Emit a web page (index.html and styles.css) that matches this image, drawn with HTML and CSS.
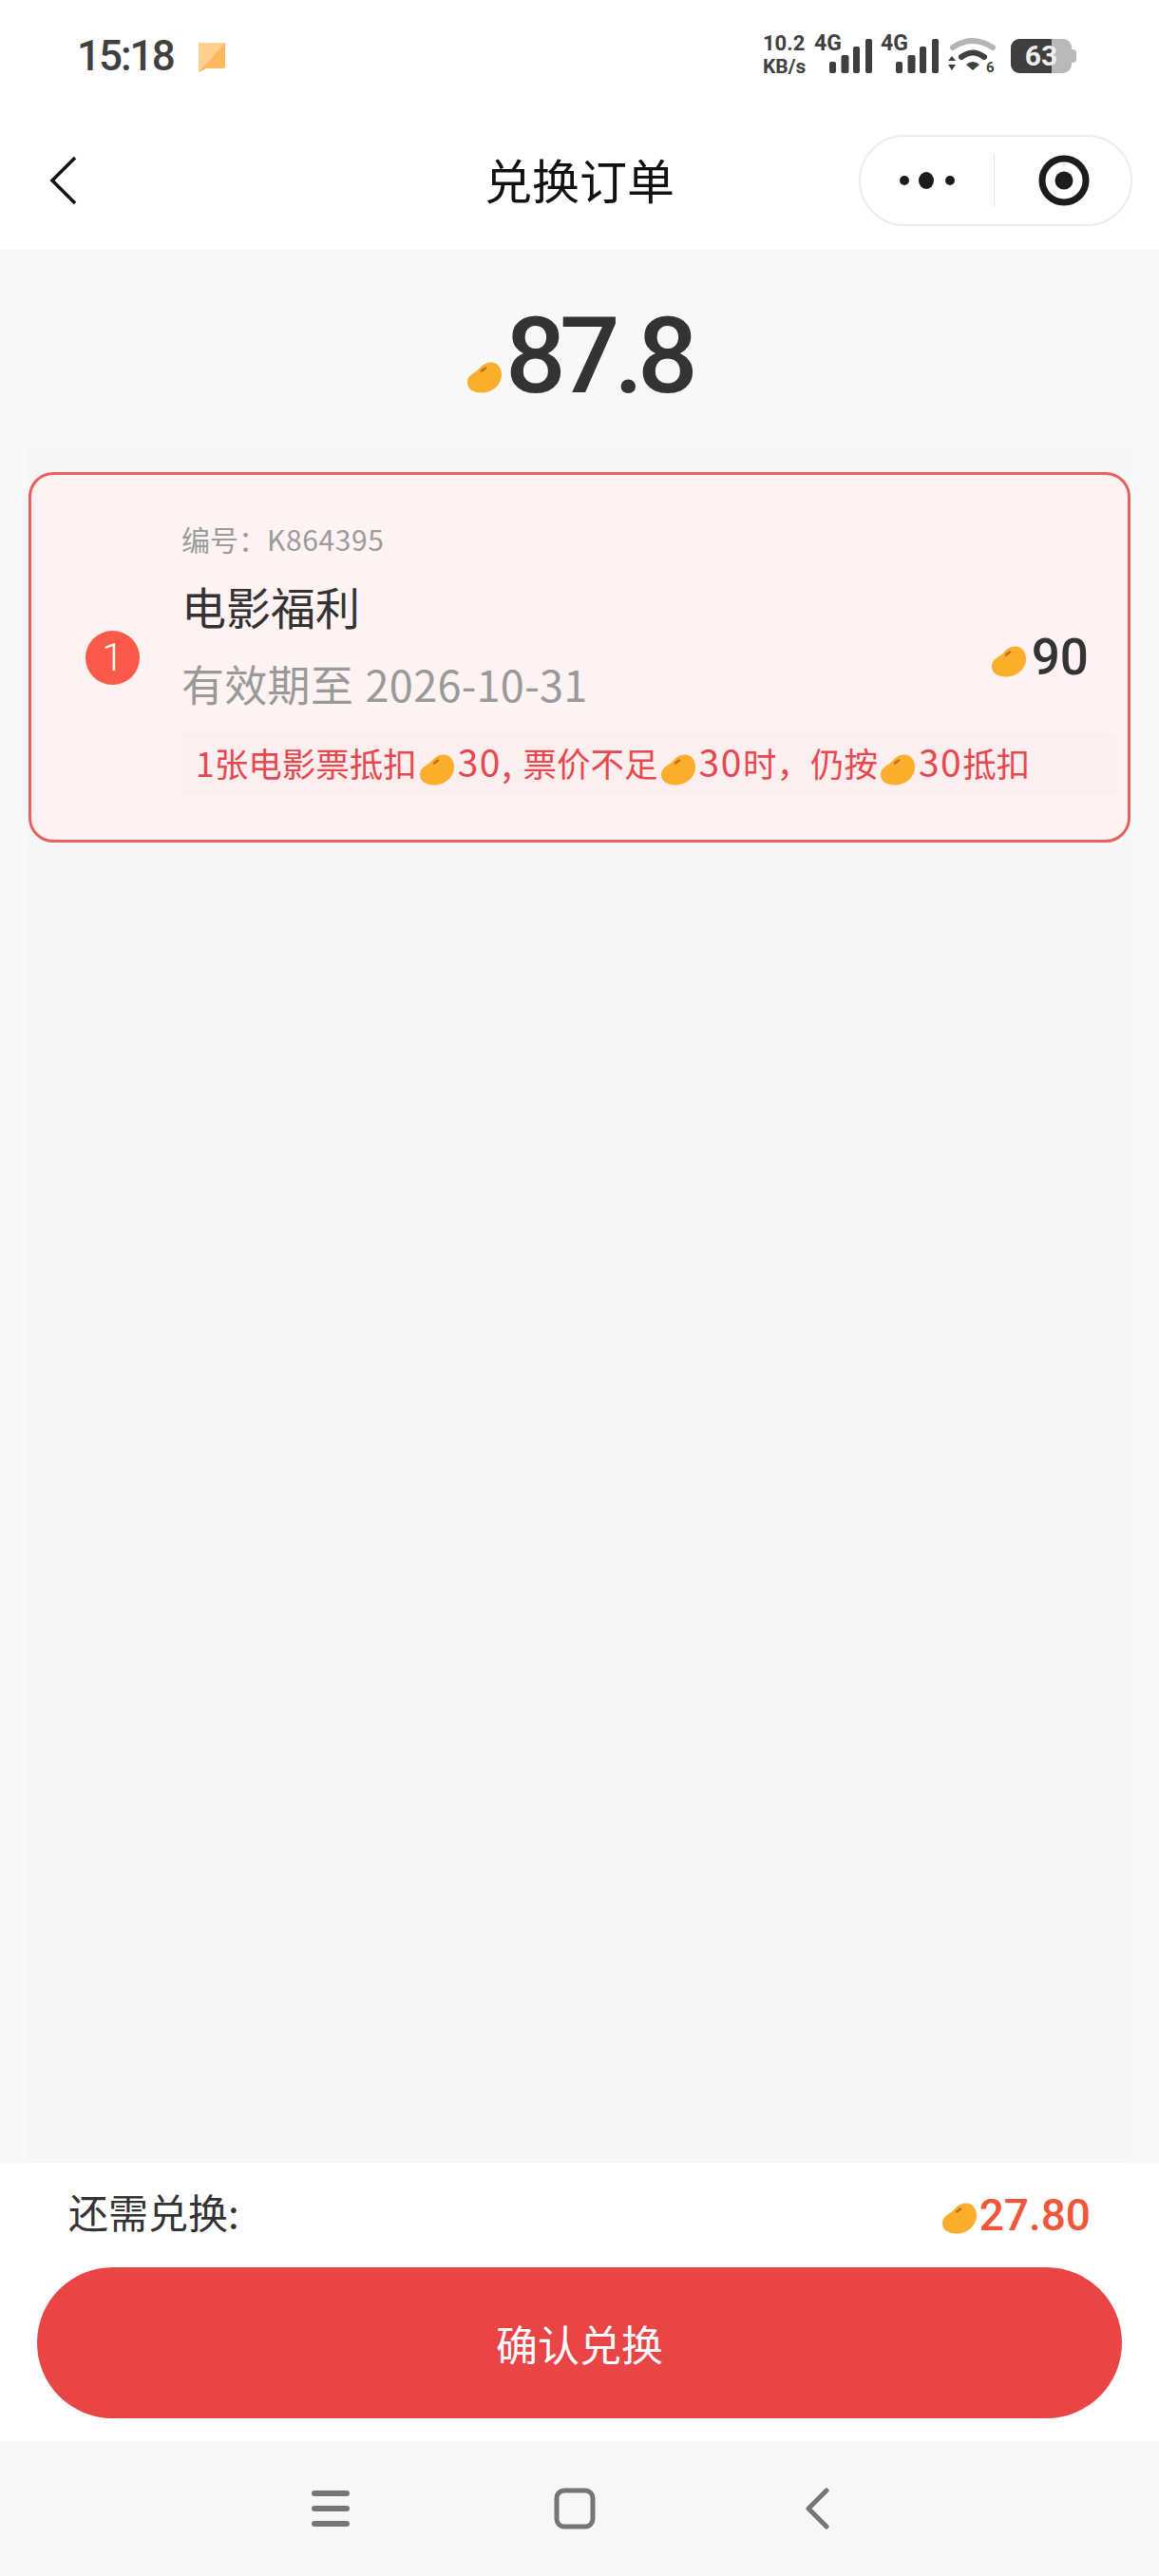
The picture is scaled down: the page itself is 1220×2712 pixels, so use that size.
FILE: index.html
```html
<!DOCTYPE html>
<html lang="zh-CN">
  <head>
    <meta charset="UTF-8" />
    <meta name="viewport" content="width=device-width, initial-scale=1.0" />
    <title>兑换订单</title>
    <link rel="stylesheet" href="styles.css">
  </head>
  <body>
    <svg class="defs" width="0" height="0">
      <symbol id="bean" viewBox="0 0 36 32">
        <path d="M0 21C0 14 6 12 11 8C15 4 18 0 25 0C32 0 36 6 36 13C36 23 27 32 15 32C6 32 0 28 0 21Z" fill="#fbad2c" />
        <path d="M15 9L19 6" stroke="#b9701c" stroke-width="2.500" stroke-linecap="round" />
      </symbol>
    </svg>

    <div class="status-bar">
      <div class="status-left">
        <span class="clock">15:18</span>
        <svg class="msg-icon" width="28" height="31" viewBox="0 0 28 31">
          <path d="M0 0H28V25Q28 27 26 27H8L0 31Z" fill="#ffd08c" />
          <path d="M28 0V25Q28 27 26 27H8L0 31Z" fill="#ffb95c" />
        </svg>
      </div>
      <div class="status-right">
        <div class="speed"><span>10.2</span><span class="speed-unit">KB/s</span></div>
        <div class="signal">
          <span class="net">4G</span>
          <svg width="46" height="36" viewBox="0 0 46 36">
            <rect x="0" y="24" width="7" height="12" rx="2" />
            <rect x="12.500" y="17" width="8" height="19" rx="2" />
            <rect x="25" y="8" width="7" height="28" rx="2" />
            <rect x="38" y="0" width="7" height="36" rx="2" />
          </svg>
        </div>
        <div class="signal">
          <span class="net">4G</span>
          <svg width="46" height="36" viewBox="0 0 46 36">
            <rect x="0" y="24" width="7" height="12" rx="2" />
            <rect x="12.500" y="17" width="8" height="19" rx="2" />
            <rect x="25" y="8" width="7" height="28" rx="2" />
            <rect x="38" y="0" width="7" height="36" rx="2" />
          </svg>
        </div>
        <svg class="wifi" width="52" height="44" viewBox="0 0 52 44">
          <path d="M6 10Q26 -4 48 10" fill="none" stroke="#b5b5b5" stroke-width="6" stroke-linecap="round" />
          <path d="M15 20Q27 11 39 20" fill="none" stroke="#3f3f3f" stroke-width="6" stroke-linecap="round" />
          <path d="M20 28Q27 22 34 28L27 34Z" fill="#3f3f3f" />
          <path d="M1 24L5 19L9 24ZM1 28L5 34L9 28Z" fill="#3f3f3f" />
          <text class="wifi-num" x="41" y="36">6</text>
        </svg>
        <div class="battery">
          <span class="battery-num">63</span>
          <span class="battery-nub"></span>
        </div>
      </div>
    </div>

    <div class="nav-bar">
      <svg class="back" width="30" height="52" viewBox="0 0 30 52">
        <path d="M27 2L3 26L27 50" fill="none" stroke="#111" stroke-width="3.500" />
      </svg>
      <h1 class="nav-title">兑换订单</h1>
      <div class="capsule">
        <div class="capsule-part">
          <svg width="58" height="18" viewBox="0 0 58 18">
            <circle cx="5" cy="9" r="5" fill="#1c1c1c" />
            <ellipse cx="28" cy="9" rx="8" ry="9" fill="#1c1c1c" />
            <circle cx="53" cy="9" r="5" fill="#1c1c1c" />
          </svg>
        </div>
        <div class="capsule-line"></div>
        <div class="capsule-part">
          <svg width="54" height="54" viewBox="0 0 54 54">
            <circle cx="27" cy="27" r="23" fill="none" stroke="#1c1c1c" stroke-width="7" />
            <circle cx="27" cy="27" r="9.500" fill="#1c1c1c" />
          </svg>
        </div>
      </div>
    </div>

    <div class="main">
      <div class="total">
        <svg class="bean bean-total"><use href="#bean" /></svg>
        <span class="total-num">87.8</span>
      </div>

      <div class="list">
        <div class="card">
          <div class="card-index">1</div>
          <div class="card-info">
            <div class="card-no">编号：<span class="card-code">K864395</span></div>
            <div class="card-name">电影福利</div>
            <div class="card-date">有效期至 2026-10-31</div>
          </div>
          <div class="card-price">
            <svg class="bean bean-price"><use href="#bean" /></svg>
            <span>90</span>
          </div>
          <div class="card-note">1张电影票抵扣<svg class="bean bean-note"><use href="#bean" /></svg><span class="note-num">30, </span>票价不足<svg class="bean bean-note"><use href="#bean" /></svg><span class="note-num">30</span>时，仍按<svg class="bean bean-note"><use href="#bean" /></svg><span class="note-num">30</span>抵扣</div>
        </div>
      </div>
    </div>

    <div class="footer">
      <div class="footer-row">
        <span class="footer-label">还需兑换:</span>
        <span class="footer-amount">
          <svg class="bean bean-amount"><use href="#bean" /></svg>
          <span>27.80</span>
        </span>
      </div>
      <button class="confirm">确认兑换</button>
    </div>

    <div class="sys-nav">
      <svg width="42" height="40" viewBox="0 0 42 40">
        <rect x="1" y="1" width="40" height="6" rx="3" />
        <rect x="1" y="17" width="40" height="6" rx="3" />
        <rect x="1" y="33" width="40" height="6" rx="3" />
      </svg>
      <svg width="44" height="44" viewBox="0 0 44 44">
        <rect x="3" y="3" width="38" height="38" rx="8" fill="none" stroke="#757575" stroke-width="5" />
      </svg>
      <svg class="sys-back" width="30" height="44" viewBox="0 0 30 44">
        <path d="M26 3L7 22L26 41" fill="none" stroke="#757575" stroke-width="5" stroke-linecap="round" stroke-linejoin="round" />
      </svg>
    </div>
  </body>
</html>
```

FILE: styles.css
```css
html,
body {
  margin: 0;
  padding: 0;
}

body {
  width: 1220px;
  height: 2712px;
  display: flex;
  flex-direction: column;
  overflow: hidden;
  font-family: "Noto Sans CJK SC", "Noto Sans", sans-serif;
  background-color: #fff;
}

.defs {
  display: block;
  height: 0;
}

/* status bar */
.status-bar {
  height: 118px;
  display: flex;
  justify-content: space-between;
  align-items: flex-start;
  padding: 0 92px 0 81px;
  color: #404040;
  box-sizing: border-box;
}

.status-left {
  display: flex;
  align-items: center;
  gap: 26px;
  margin-top: 33px;
  height: 52px;
}

.clock {
  font-family: Roboto, sans-serif;
  font-size: 44px;
  font-weight: 500;
  letter-spacing: -2px;
  line-height: 52px;
}

.msg-icon {
  margin-top: 2px;
}

.status-right {
  display: flex;
  align-items: flex-start;
  margin-top: 34px;
}

.speed {
  display: flex;
  flex-direction: column;
  width: 54px;
  font-family: Roboto, sans-serif;
  font-size: 22px;
  font-weight: 700;
  line-height: 24px;
}

.speed-unit {
  font-size: 21px;
}

.signal {
  position: relative;
  width: 70px;
  height: 42px;
}

.signal svg {
  position: absolute;
  left: 16px;
  top: 7px;
  fill: #3f3f3f;
}

.net {
  position: absolute;
  left: 0;
  top: 0;
  font-family: Roboto, sans-serif;
  font-size: 23px;
  font-weight: 700;
  line-height: 24px;
}

.wifi {
  margin: 6px 15px 0 0;
}

.wifi-num {
  font-family: Roboto, sans-serif;
  font-size: 15px;
  font-weight: 700;
  fill: #3f3f3f;
}

.battery {
  position: relative;
  width: 64px;
  height: 36px;
  margin-top: 7px;
  border-radius: 9px;
  background: linear-gradient(90deg, #3f3f3f 0, #3f3f3f 43px, #b9b9b9 43px);
  text-align: center;
  font-family: Roboto, sans-serif;
  font-size: 30px;
  font-weight: 700;
  line-height: 36px;
  color: #eee;
}

.battery-nub {
  position: absolute;
  right: -5px;
  top: 11px;
  width: 5px;
  height: 14px;
  border-radius: 0 4px 4px 0;
  background-color: #b9b9b9;
}

/* nav */
.nav-bar {
  height: 145px;
  display: grid;
  grid-template-columns: 1fr auto 1fr;
  align-items: center;
  padding: 0 28px;
  box-sizing: border-box;
}

.back {
  margin-left: 24px;
  margin-bottom: 2px;
}

.nav-title {
  margin: 0 0 5px;
  font-size: 50px;
  font-weight: 400;
  color: #111;
  line-height: 60px;
}

.capsule {
  justify-self: end;
  width: 288px;
  height: 96px;
  margin-bottom: 1px;
  display: flex;
  align-items: center;
  box-sizing: border-box;
  border: 2px solid #ececec;
  border-radius: 48px;
}

.capsule-part {
  flex: 1;
  display: flex;
  justify-content: center;
  align-items: center;
}

.capsule-part:last-child {
  padding-left: 3px;
}

.capsule-line {
  width: 1px;
  height: 56px;
  background-color: #e6e6e6;
}

/* content */
.main {
  flex: 1;
  display: flex;
  flex-direction: column;
  background-color: #f7f8f8;
  min-height: 0;
}

.total {
  height: 207px;
  display: flex;
  justify-content: center;
  align-items: flex-start;
  box-sizing: border-box;
}

.total-num {
  font-family: Roboto, sans-serif;
  font-size: 112px;
  font-weight: 500;
  letter-spacing: -6.500px;
  line-height: 130px;
  color: #333;
  margin-top: 47px;
}

.bean {
  display: inline-block;
  flex-shrink: 0;
}

.bean-total {
  width: 36px;
  height: 33px;
  margin: 118px 4px 0 0;
}

.list {
  flex: 1;
  margin: 0 30px 0 28px;
  padding: 27px 0 0 2px;
  background-color: #f6f6f6;
}

.card {
  height: 390px;
  display: grid;
  grid-template-columns: 158px 1fr auto;
  grid-template-rows: 273px 111px;
  box-sizing: border-box;
  border: 3px solid #e9605d;
  border-radius: 26px;
  background-color: #fef2f2;
}

.card-index {
  grid-column: 1;
  grid-row: 1 / 3;
  align-self: center;
  width: 57px;
  height: 57px;
  margin-left: 57px;
  border-radius: 50%;
  background-color: #fb5a4b;
  color: #fff;
  font-family: Roboto, sans-serif;
  font-size: 40px;
  font-weight: 300;
  line-height: 57px;
  text-align: center;
}

.card-info {
  grid-column: 2;
  grid-row: 1;
  padding-top: 49px;
}

.card-no {
  font-size: 30px;
  line-height: 36px;
  color: #9b9b9b;
}

.card-code {
  letter-spacing: 0.600px;
}

.card-name {
  margin-top: 23px;
  font-size: 47px;
  line-height: 60px;
  color: #333;
}

.card-date {
  margin-top: 25px;
  font-size: 45px;
  letter-spacing: 0.300px;
  word-spacing: 2px;
  line-height: 54px;
  color: #999;
}

.card-price {
  grid-column: 3;
  grid-row: 1 / 3;
  align-self: center;
  margin-right: 41px;
  display: flex;
  align-items: center;
  font-family: Roboto, sans-serif;
  font-size: 53px;
  font-weight: 500;
  line-height: 62px;
  color: #333;
}

.card-note {
  grid-column: 2 / 4;
  grid-row: 2;
  height: 64px;
  margin-right: 11px;
  padding-left: 15px;
  background-color: #fdefef;
  color: #e8484f;
  font-size: 35.500px;
  line-height: 56px;
  white-space: nowrap;
  border-radius: 4px;
}

.note-num {
  font-size: 39px;
  letter-spacing: 1.500px;
  white-space: pre;
}

.bean-note {
  width: 36px;
  height: 33px;
  margin: 0 4px 0 3px;
  vertical-align: -9px;
}

.bean-price {
  width: 36px;
  height: 33px;
  margin: 8px 6px 0 0;
}

/* footer */
.footer {
  height: 293px;
  padding: 0 39px;
  box-sizing: border-box;
  background-color: #fff;
}

.footer-row {
  height: 110px;
  display: flex;
  justify-content: space-between;
  align-items: center;
  padding: 0 33px;
}

.footer-label {
  font-size: 42px;
  line-height: 60px;
  margin-bottom: 8px;
  color: #333;
}

.footer-amount {
  display: flex;
  align-items: center;
  font-family: Roboto, sans-serif;
  font-size: 46px;
  font-weight: 500;
  color: #f0573a;
}

.bean-amount {
  width: 36px;
  height: 33px;
  margin: 6px 3px 0 0;
}

.confirm {
  display: block;
  width: 100%;
  height: 159px;
  border: none;
  border-radius: 80px;
  background-color: #e94446;
  color: #fff;
  font-family: inherit;
  font-size: 44px;
}

/* system nav */
.sys-nav {
  height: 142px;
  display: flex;
  justify-content: center;
  align-items: center;
  gap: 214px;
  padding-right: 20px;
  box-sizing: border-box;
  background-color: #f7f7f7;
}

.sys-nav svg {
  fill: #757575;
}

.sys-back {
  margin-left: 3px;
}
```
